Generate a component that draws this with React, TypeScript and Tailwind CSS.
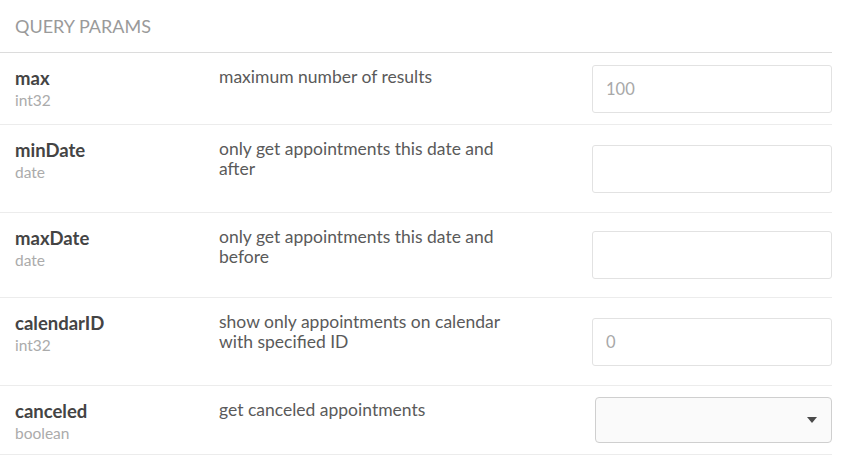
import React from "react";

type Row = {
  name: string;
  type: string;
  desc: string[];
  h: string;
  control: "input" | "select";
  placeholder?: string;
};

const rows: Row[] = [
  { name: "max", type: "int32", desc: ["maximum number of results"], h: "h-[72px]", control: "input", placeholder: "100" },
  { name: "minDate", type: "date", desc: ["only get appointments this date and", "after"], h: "h-[88px]", control: "input" },
  { name: "maxDate", type: "date", desc: ["only get appointments this date and", "before"], h: "h-[85px]", control: "input" },
  { name: "calendarID", type: "int32", desc: ["show only appointments on calendar", "with specified ID"], h: "h-[88px]", control: "input", placeholder: "0" },
  { name: "canceled", type: "boolean", desc: ["get canceled appointments"], h: "h-[69px]", control: "select" },
];

const font = "Lato, 'Noto Sans', sans-serif";

export default function App() {
  return (
    <div className="w-[850px] h-[470px] bg-white overflow-hidden" style={{ fontFamily: font }}>
      <div className="w-[832px]">
        <div className="h-[53px] border-b border-[#dcdcdc] pl-[15px] pt-[16px] text-[18px] leading-[20px] text-[#9a9a9a]">
          QUERY PARAMS
        </div>
        {rows.map((r) => (
          <div key={r.name} className={`${r.h} flex border-b border-[#ececec]`}>
            <div className="w-[219px] pl-[15px] pt-[15px]">
              <div className="text-[18.5px] leading-[20px] font-bold text-[#444]">{r.name}</div>
              <div className="text-[15.5px] leading-[20px] text-[#ababab] mt-[2px]">{r.type}</div>
            </div>
            <div className="flex-1 pt-[14px] text-[17.5px] leading-[20px] text-[#5a5a5a]">
              {r.desc.map((d) => (
                <div key={d}>{d}</div>
              ))}
            </div>
            <div className="w-[243px] flex items-center justify-end">
              {r.control === "input" ? (
                <input
                  className="w-[240px] h-[48px] border border-[#e2e2e2] rounded-[3px] pl-[13px] text-[16.5px] text-[#555] placeholder:text-[#a8a8a8] outline-none"
                  placeholder={r.placeholder}
                  style={{ fontFamily: font }}
                />
              ) : (
                <div className="w-[237px] h-[46px] border border-[#cfcfcf] rounded-[4px] bg-[#fafafa] flex items-center justify-end pr-[14px]">
                  <svg width="10" height="6" viewBox="0 0 10 6">
                    <path d="M0 0 L10 0 L5 6 Z" fill="#4a4a4a" />
                  </svg>
                </div>
              )}
            </div>
          </div>
        ))}
      </div>
    </div>
  );
}
